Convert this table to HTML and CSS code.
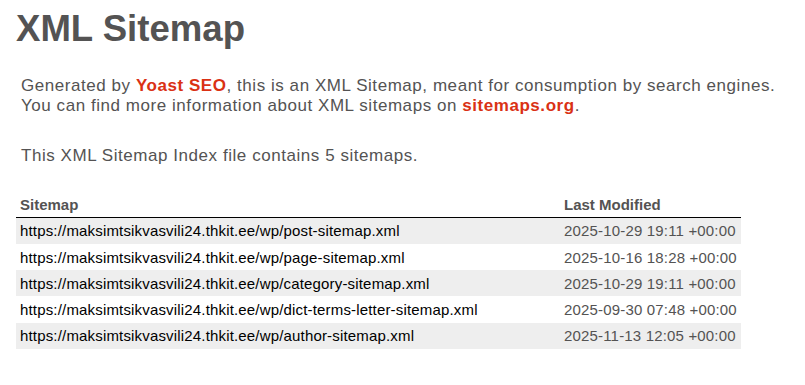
FILE: index.html
```html
<!DOCTYPE html>
<html>
<head>
<meta charset="utf-8">
<title>XML Sitemap</title>
<link rel="stylesheet" href="styles.css">
</head>
<body>
<div class="content">
  <h1 class="title">XML Sitemap</h1>
  <p class="expl">Generated by <a href="#">Yoast SEO</a>, this is an XML Sitemap, meant for consumption by search engines.<br>You can find more information about XML sitemaps on <a href="#">sitemaps.org</a>.</p>
  <p class="expl count">This XML Sitemap Index file contains 5 sitemaps.</p>
  <table class="sitemap">
    <thead>
      <tr><th class="col-loc">Sitemap</th><th class="col-mod">Last Modified</th></tr>
    </thead>
    <tbody>
      <tr><td><a href="#">https://maksimtsikvasvili24.thkit.ee/wp/post-sitemap.xml</a></td><td>2025-10-29 19:11 +00:00</td></tr>
      <tr><td><a href="#">https://maksimtsikvasvili24.thkit.ee/wp/page-sitemap.xml</a></td><td>2025-10-16 18:28 +00:00</td></tr>
      <tr><td><a href="#">https://maksimtsikvasvili24.thkit.ee/wp/category-sitemap.xml</a></td><td>2025-10-29 19:11 +00:00</td></tr>
      <tr><td><a href="#">https://maksimtsikvasvili24.thkit.ee/wp/dict-terms-letter-sitemap.xml</a></td><td>2025-09-30 07:48 +00:00</td></tr>
      <tr><td><a href="#">https://maksimtsikvasvili24.thkit.ee/wp/author-sitemap.xml</a></td><td>2025-11-13 12:05 +00:00</td></tr>
    </tbody>
  </table>
</div>
</body>
</html>
```
FILE: styles.css
```css
html, body {
  margin: 0;
  padding: 0;
  background: #fff;
}
body {
  font-family: "Liberation Sans", Arial, Helvetica, sans-serif;
  color: #545353;
}
.content {
  padding: 8px 16px 0 16px;
}
.title {
  margin: 0;
  font-size: 36.6px;
  line-height: 42px;
  font-weight: bold;
  color: #545353;
}
.expl {
  margin: 25.6px 0 0 5px;
  font-size: 17px;
  line-height: 20px;
  letter-spacing: 0.55px;
}
.expl.count {
  margin-top: 30px;
}
.expl a {
  color: #da3114;
  font-weight: bold;
  text-decoration: none;
}
.sitemap {
  margin-top: 29.4px;
  border: none;
  border-collapse: collapse;
  width: 725px;
  table-layout: fixed;
}
.sitemap th {
  text-align: left;
  font-size: 15px;
  line-height: 16px;
  font-weight: bold;
  color: #545353;
  padding: 2px 4px 3.7px 4px;
  border-bottom: 1px solid #000;
  white-space: nowrap;
}
.sitemap .col-loc {
  width: 536px;
}
.sitemap td {
  font-size: 15px;
  line-height: 18.25px;
  letter-spacing: 0.17px;
  padding: 4.8px 2px 3.2px 4px;
  color: #545353;
  white-space: nowrap;
}
.sitemap tbody tr:nth-child(odd) td {
  background-color: #eee;
}
.sitemap td a {
  color: #000;
  text-decoration: none;
}
```
